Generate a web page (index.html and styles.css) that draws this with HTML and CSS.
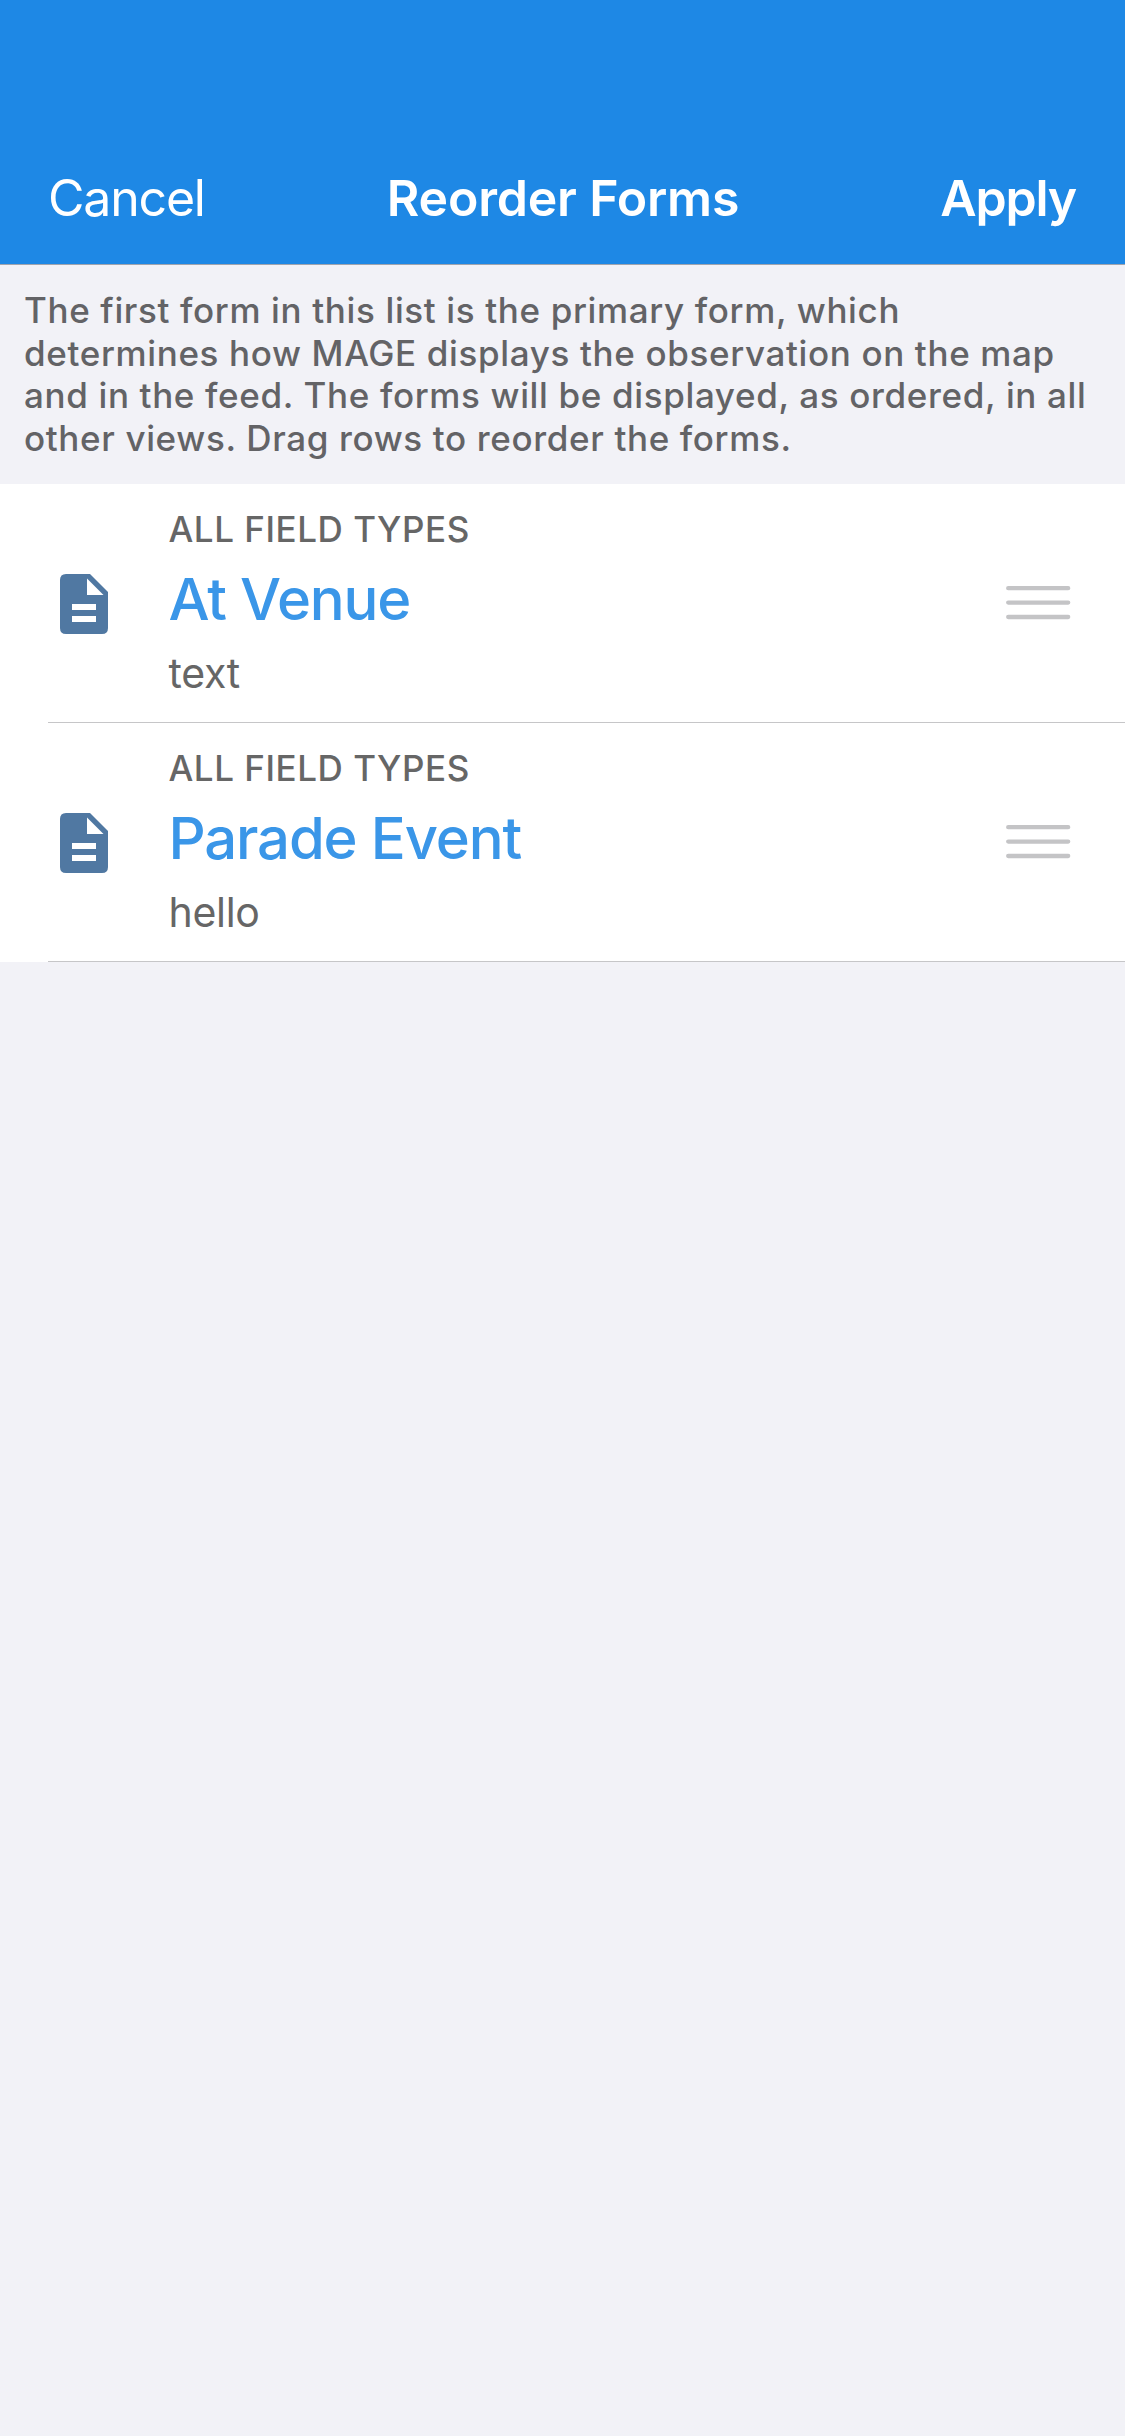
FILE: index.html
```html
<!DOCTYPE html>
<html lang="en">
<head>
<meta charset="utf-8">
<title>Reorder Forms</title>
<link rel="stylesheet" href="styles.css">
</head>
<body>
<header class="navbar">
  <span class="cancel">Cancel</span>
  <h1 class="nav-title">Reorder Forms</h1>
  <span class="apply">Apply</span>
</header>
<p class="hint">The first form in this list is the primary form, which<br>determines how MAGE displays the observation on the map<br>and in the feed. The forms will be displayed, as ordered, in all<br>other views. Drag rows to reorder the forms.</p>
<main class="list">
  <section class="row">
    <svg class="doc" viewBox="0 0 48 60"><path fill="#5078a2" d="M6 0H30L48 18V54Q48 60 42 60H6Q0 60 0 54V6Q0 0 6 0Z"/><path fill="#fff" d="M27 4.500V21H43.500ZM12 30H36V36H12ZM12 42H36V48H12Z"/></svg>
    <div class="copy">
      <div class="kind">ALL FIELD TYPES</div>
      <div class="name">At Venue</div>
      <div class="value">text</div>
    </div>
    <svg class="grip" viewBox="0 0 65 34"><path d="M2.200 2.200H62.200M2.200 16.600H62.200M2.200 31H62.200"/></svg>
  </section>
  <section class="row">
    <svg class="doc" viewBox="0 0 48 60"><path fill="#5078a2" d="M6 0H30L48 18V54Q48 60 42 60H6Q0 60 0 54V6Q0 0 6 0Z"/><path fill="#fff" d="M27 4.500V21H43.500ZM12 30H36V36H12ZM12 42H36V48H12Z"/></svg>
    <div class="copy">
      <div class="kind">ALL FIELD TYPES</div>
      <div class="name">Parade Event</div>
      <div class="value">hello</div>
    </div>
    <svg class="grip" viewBox="0 0 65 34"><path d="M2.200 2.200H62.200M2.200 16.600H62.200M2.200 31H62.200"/></svg>
  </section>
</main>
</body>
</html>
```
FILE: styles.css
```css
* { box-sizing: border-box; }
body { margin: 0; min-height: 2436px; background: #f2f2f7; font-family: Inter, "Liberation Sans", sans-serif; }
.navbar { height: 265px; padding: 132px 49px 0 48px; background: #1e88e5; border-bottom: 1px solid #a0a4ae; color: #fff; display: grid; grid-template-columns: 1fr auto 1fr; align-items: center; font-size: 50px; line-height: 132px; white-space: nowrap; }
.nav-title { margin: 0; padding-left: 2px; font-size: 50px; font-weight: 600; letter-spacing: -0.2px; }
.cancel { letter-spacing: -1.2px; }
.apply { text-align: right; font-weight: 600; letter-spacing: -1.2px; }
.hint { margin: 0; height: 219px; padding: 24px 24px 0; font-size: 35px; line-height: 42.7px; font-weight: 500; letter-spacing: 0.64px; color: #636366; white-space: nowrap; }
.list { background: #fff; }
.row { height: 239px; display: flex; align-items: flex-start; padding: 0 54px 0 60px; background: linear-gradient(#c6c6c8, #c6c6c8) 48px 100% / 100% 1px no-repeat; }
.doc { width: 48px; height: 60px; flex: none; margin-top: 90px; }
.copy { margin-left: 60.5px; flex: 1; padding-top: 19px; white-space: nowrap; }
.kind { height: 52px; line-height: 52px; font-size: 35px; font-weight: 500; letter-spacing: 0.53px; color: #666; }
.name { height: 88px; line-height: 88px; font-size: 58px; font-weight: 500; letter-spacing: -1.15px; color: #3a96e8; }
.value { height: 60px; line-height: 60px; font-size: 41px; letter-spacing: -0.3px; color: #666; }
.grip { width: 65px; height: 34px; flex: none; margin-top: 102px; fill: none; stroke: #c4c4c6; stroke-width: 4.3px; stroke-linecap: round; }
```
